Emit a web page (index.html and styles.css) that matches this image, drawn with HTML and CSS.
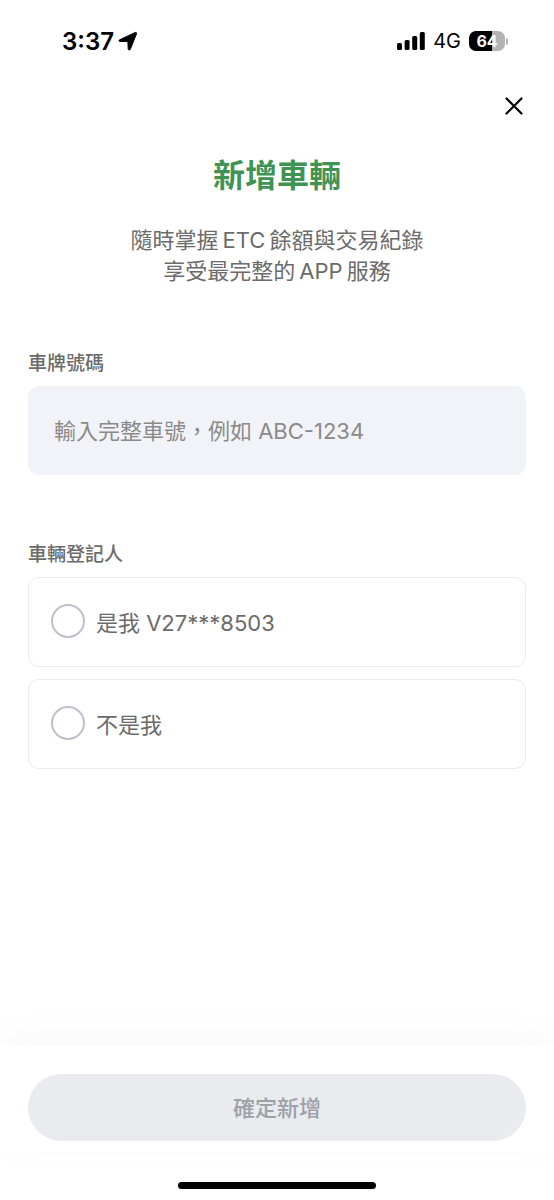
FILE: index.html
```html
<!DOCTYPE html>
<html lang="zh-Hant">
<head>
<meta charset="utf-8">
<meta name="viewport" content="width=device-width, initial-scale=1">
<title>新增車輛</title>
<link rel="stylesheet" href="styles.css">
</head>
<body>
<div class="screen">
  <header class="status">
    <div class="status-time">
      <span>3:37</span>
      <svg width="20" height="20" viewBox="0 0 20 20" aria-hidden="true"><path d="M1.500 8.900 17.200 1.500c1-.4 1.700.3 1.300 1.300L12.300 18.300c-.5 1.100-2 .9-2.100-.3l-.3-6.900-.5-.5-7.500-.2C.7 10.300.5 9.300 1.500 8.900Z" stroke="#000" stroke-width="1" stroke-linejoin="round"/></svg>
    </div>
    <div class="status-info">
      <svg width="28" height="18" viewBox="0 0 28 18" aria-hidden="true"><rect x="0" y="11" width="5" height="7" rx="1.500"/><rect x="7.600" y="8" width="5" height="10" rx="1.500"/><rect x="15.200" y="4" width="5" height="14" rx="1.500"/><rect x="22.800" y="0" width="5" height="18" rx="1.500"/></svg>
      <span class="network">4G</span>
      <div class="battery"><span class="battery-body">64</span><span class="battery-cap"></span></div>
    </div>
  </header>
  <main class="content">
    <div class="toolbar">
      <button class="close" type="button" aria-label="關閉"><svg width="18" height="18" viewBox="0 0 18 18" aria-hidden="true"><path d="M1.500 1.500l15 15M16.500 1.500l-15 15" fill="none" stroke="#000" stroke-width="2.200" stroke-linecap="round"/></svg></button>
    </div>
    <h1 class="title">新增車輛</h1>
    <p class="subtitle">隨時掌握<span class="latin">ETC</span>餘額與交易紀錄<br>享受最完整的<span class="latin">APP</span>服務</p>
    <form class="form" id="vehicle">
      <div class="group">
        <label class="label" for="plate">車牌號碼</label>
        <input class="field" id="plate" type="text" placeholder="輸入完整車號，例如 ABC-1234">
      </div>
      <fieldset class="group">
        <legend class="label">車輛登記人</legend>
        <div class="options">
          <label class="option"><input class="radio" type="radio" name="owner"><span>是我 V27***8503</span></label>
          <label class="option"><input class="radio" type="radio" name="owner"><span>不是我</span></label>
        </div>
      </fieldset>
    </form>
  </main>
  <footer class="footer">
    <button class="submit" type="submit" form="vehicle" disabled>確定新增</button>
  </footer>
  <div class="home"><span class="home-bar"></span></div>
</div>
</body>
</html>
```
FILE: styles.css
```css
* {
  box-sizing: border-box;
}

body {
  margin: 0;
  background: #fff;
  color: #6b6b6b;
  font-family: Inter, "Noto Sans CJK TC", sans-serif;
  font-size: 22px;
}

button,
input {
  font: inherit;
}

.screen {
  display: flex;
  flex-direction: column;
  min-height: 100vh;
}

.status {
  display: flex;
  align-items: center;
  justify-content: space-between;
  height: 82px;
  padding: 0 46px 0 62px;
  color: #000;
}

.status-time {
  display: flex;
  align-items: center;
  gap: 4px;
  font-size: 24px;
  font-weight: 600;
}

.status-info {
  display: flex;
  align-items: center;
  gap: 8px;
}

.network {
  font-size: 20px;
  font-weight: 400;
}

.battery {
  display: flex;
  align-items: center;
  gap: 1px;
}

.battery-body {
  width: 36px;
  border-radius: 7px;
  background: linear-gradient(90deg, #000 64%, #b3b3b3 64%);
  color: #fff;
  font-size: 16px;
  font-weight: 700;
  line-height: 20px;
  text-align: center;
}

.battery-cap {
  width: 2px;
  height: 7px;
  border-radius: 0 2px 2px 0;
  background: #b3b3b3;
}

.content {
  flex: 1;
  padding: 0 28px;
}

.toolbar {
  display: flex;
  justify-content: flex-end;
  padding: 10px 0;
}

.close {
  display: grid;
  place-items: center;
  width: 28px;
  height: 28px;
  margin-right: -2px;
  padding: 0;
  border: 0;
  background: none;
}

.title {
  margin: 22px 0 0;
  color: #3f9455;
  font-size: 32px;
  font-weight: 600;
  line-height: 48px;
  text-align: center;
}

.subtitle {
  margin: 25px 0 0;
  line-height: 31px;
  text-align: center;
}

.latin {
  margin: 0 4px;
}

.form {
  display: grid;
  gap: 66px;
  margin-top: 63px;
}

.group {
  min-width: 0;
  margin: 0;
  padding: 0;
  border: 0;
}

.label {
  display: block;
  padding: 0 0 8px;
  font-size: 19px;
  font-weight: 500;
  line-height: 28px;
}

.field {
  display: block;
  width: 100%;
  height: 89px;
  padding: 0 26px;
  border: 0;
  border-radius: 11px;
  background: #f2f3f8;
  color: #6b6b6b;
}

.field::placeholder {
  color: #8a8a8a;
  opacity: 1;
}

.options {
  display: grid;
  gap: 12px;
}

.option {
  display: flex;
  align-items: center;
  gap: 11px;
  height: 90px;
  padding: 0 22px 2px;
  border: 1px solid #ebebf0;
  border-radius: 11px;
}

.radio {
  appearance: none;
  width: 34px;
  height: 34px;
  margin: 0;
  border: 2px solid #bcc1cb;
  border-radius: 50%;
}

.radio:checked {
  border: 10px solid #3f9455;
}

.footer {
  padding: 29px 28px 11px;
  background: #fff;
  box-shadow: 0 -8px 40px rgba(0, 0, 0, 0.03);
}

.submit {
  display: block;
  width: 100%;
  height: 67px;
  padding: 0 0 4px;
  border: 0;
  border-radius: 34px;
  background: #e9ebef;
  color: #9ca1a7;
  font-weight: 500;
}

.home {
  display: flex;
  justify-content: center;
  padding: 30px 0 11px;
}

.home-bar {
  width: 198px;
  height: 7px;
  border-radius: 4px;
  background: #000;
}
```
